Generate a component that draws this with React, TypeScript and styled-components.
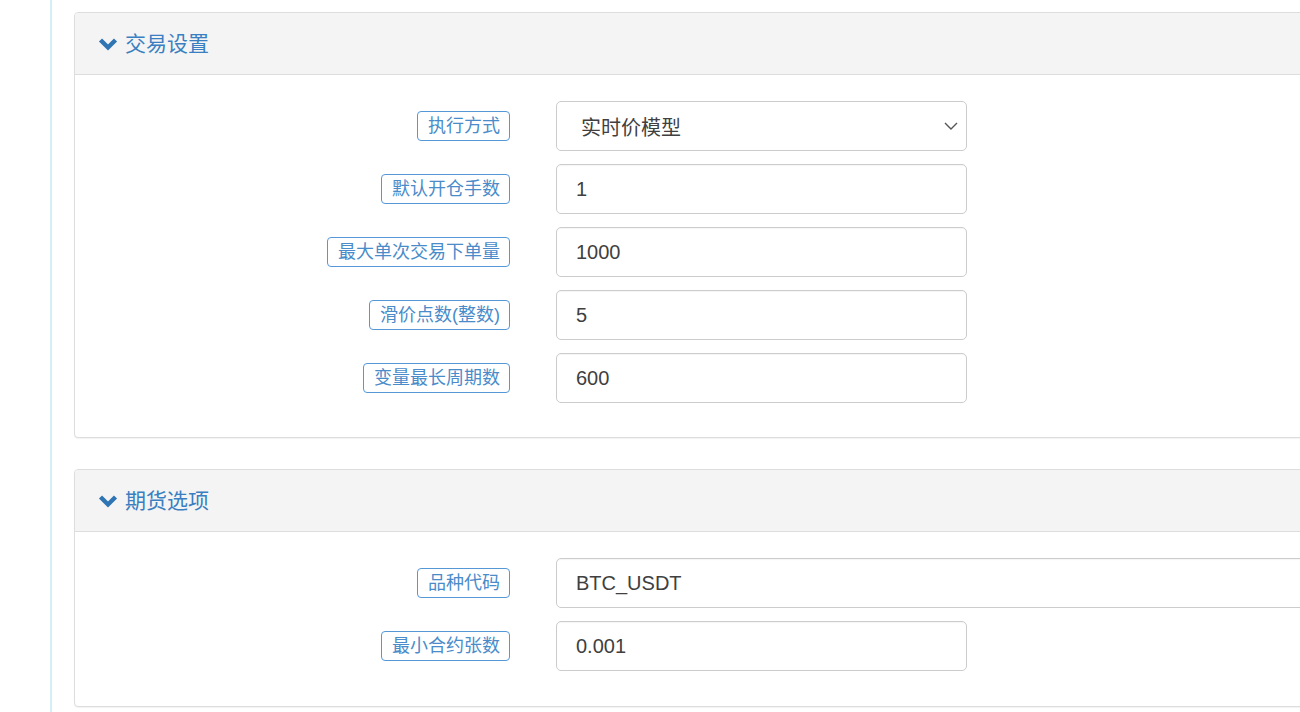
import React from "react";
import styled, { createGlobalStyle } from "styled-components";

const GlobalStyle = createGlobalStyle`
  html, body {
    margin: 0;
    padding: 0;
    background: #ffffff;
    overflow: hidden;
  }
  body {
    font-family: "Liberation Sans", "Noto Sans CJK SC", sans-serif;
    color: #333333;
  }
`;

const Page = styled.div`
  display: flex;
  width: 1300px;
  height: 712px;
  overflow: hidden;
`;

const SideRule = styled.div`
  flex: 0 0 2px;
  margin-left: 50px;
  background: #d6eef6;
`;

const Content = styled.div`
  flex: 0 0 auto;
  margin-left: 22px;
  width: 1320px;
  display: flex;
  flex-direction: column;
`;

const Panel = styled.section<{ $gap: number }>`
  margin-top: ${(p) => p.$gap}px;
  border: 1px solid #dddddd;
  border-radius: 4px;
  background: #ffffff;
  box-shadow: 0 1px 1px rgba(0, 0, 0, 0.05);
`;

const PanelHeader = styled.div`
  height: 61px;
  display: flex;
  align-items: center;
  gap: 7px;
  padding-left: 23px;
  background: #f4f4f4;
  border-bottom: 1px solid #dddddd;
  border-radius: 3px 3px 0 0;
`;

const PanelTitle = styled.span`
  font-size: 21px;
  line-height: 1;
  color: #3a7fc1;
`;

const PanelBody = styled.div<{ $bottom: number }>`
  padding: 26px 0 ${(p) => p.$bottom}px 0;
  display: flex;
  flex-direction: column;
  gap: 13px;
`;

const FormRow = styled.div`
  display: grid;
  grid-template-columns: 435px auto;
  column-gap: 46px;
  align-items: center;
  height: 50px;
`;

const LabelCell = styled.div`
  display: flex;
  justify-content: flex-end;
`;

const Label = styled.span`
  display: inline-flex;
  align-items: center;
  height: 30px;
  box-sizing: border-box;
  padding: 0 9px 0 10px;
  border: 1px solid #5697d6;
  border-radius: 4px;
  font-size: 18px;
  line-height: 1;
  color: #4a8bc9;
  white-space: nowrap;
`;

const TextField = styled.input<{ $wide?: boolean }>`
  box-sizing: border-box;
  width: ${(p) => (p.$wide ? "900px" : "411px")};
  height: 50px;
  padding: 0 19px;
  border: 1px solid #cccccc;
  border-radius: 5px;
  background: #ffffff;
  font-family: "Liberation Sans", "Noto Sans CJK SC", sans-serif;
  font-size: 20px;
  color: #404040;
  outline: none;
  box-shadow: inset 0 1px 1px rgba(0, 0, 0, 0.04);
`;

const SelectBox = styled.div`
  position: relative;
  box-sizing: border-box;
  width: 411px;
  height: 50px;
  display: flex;
  align-items: center;
  padding: 0 24px;
  border: 1px solid #cccccc;
  border-radius: 5px;
  background: #ffffff;
  font-size: 20px;
  color: #404040;
`;

const SelectArrow = styled.svg`
  position: absolute;
  right: 8px;
  top: 50%;
  margin-top: -4px;
`;

const Chevron = () => (
  <svg width="20" height="14" viewBox="0 0 20 14" aria-hidden="true">
    <path
      d="M2.5 3 L10 10.5 L17.5 3"
      fill="none"
      stroke="#2f75b4"
      strokeWidth="4.4"
      strokeLinejoin="miter"
    />
  </svg>
);

type Field = { label: string; value: string; select?: boolean; wide?: boolean };

const tradeFields: Field[] = [
  { label: "执行方式", value: "实时价模型", select: true },
  { label: "默认开仓手数", value: "1" },
  { label: "最大单次交易下单量", value: "1000" },
  { label: "滑价点数(整数)", value: "5" },
  { label: "变量最长周期数", value: "600" },
];

const futureFields: Field[] = [
  { label: "品种代码", value: "BTC_USDT", wide: true },
  { label: "最小合约张数", value: "0.001" },
];

const Row = ({ field }: { field: Field }) => (
  <FormRow>
    <LabelCell>
      <Label>{field.label}</Label>
    </LabelCell>
    {field.select ? (
      <SelectBox>
        {field.value}
        <SelectArrow width="14" height="8" viewBox="0 0 14 8" aria-hidden="true">
          <path d="M1 1 L7 7 L13 1" fill="none" stroke="#555" strokeWidth="1.4" />
        </SelectArrow>
      </SelectBox>
    ) : (
      <TextField readOnly value={field.value} $wide={field.wide} />
    )}
  </FormRow>
);

const SettingsPanel = ({
  title,
  fields,
  gap,
  bottom,
}: {
  title: string;
  fields: Field[];
  gap: number;
  bottom: number;
}) => (
  <Panel $gap={gap}>
    <PanelHeader>
      <Chevron />
      <PanelTitle>{title}</PanelTitle>
    </PanelHeader>
    <PanelBody $bottom={bottom}>
      {fields.map((f) => (
        <Row key={f.label} field={f} />
      ))}
    </PanelBody>
  </Panel>
);

export default function App() {
  return (
    <>
      <GlobalStyle />
      <Page>
        <SideRule />
        <Content>
          <SettingsPanel title="交易设置" fields={tradeFields} gap={12} bottom={34} />
          <SettingsPanel title="期货选项" fields={futureFields} gap={31} bottom={35} />
        </Content>
      </Page>
    </>
  );
}
